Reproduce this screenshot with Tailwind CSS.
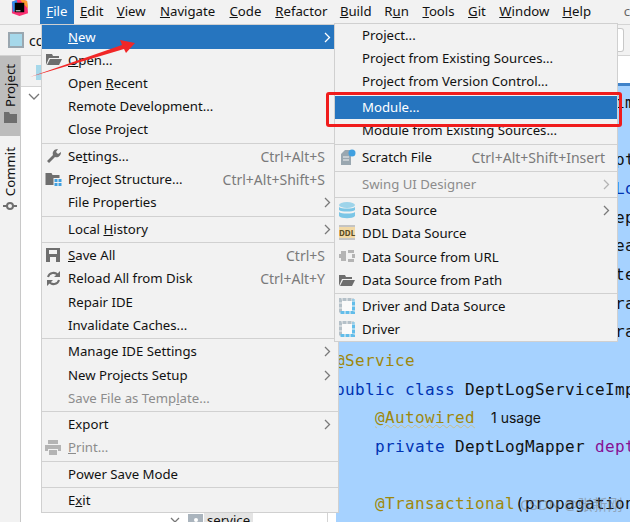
<!DOCTYPE html>
<html lang="en">
<head>
    <meta charset="UTF-8">
    <title>IDE File menu</title>
    <script src="https://cdn.jsdelivr.net/npm/@tailwindcss/browser@4"></script>
</head>
<body class="relative w-[630px] h-[522px] overflow-hidden bg-[#f2f2f2] font-['Noto_Sans',sans-serif] text-[13.2px] text-[#111]">

    <!-- menu bar -->
    <div class="flex h-[24px] bg-[#f2f2f2]">
        <div class="w-[40px] flex justify-center">
            <svg width="17" height="17" viewBox="0 0 18 18" class="-mt-[1px]">
                <path d="M1 3 9 0l8 2 1 13-9 3-8-3z" fill="#fc2f72"/>
                <path d="M9 0l8 2 1 8-6-6z" fill="#ff9a2e"/>
                <path d="M1 3l5-2 2 8-6 5z" fill="#2f8cf0"/>
                <rect x="4" y="4" width="10" height="10" fill="#000"/>
                <rect x="5" y="12" width="5" height="1" fill="#fff"/>
            </svg>
        </div>
        <span class="w-[34px] flex items-center justify-center bg-[#2675bf] text-white"><span><u>F</u>ile</span></span>
        <span class="w-[36px] flex items-center justify-center"><span><u>E</u>dit</span></span>
        <span class="w-[43px] flex items-center justify-center"><span><u>V</u>iew</span></span>
        <span class="w-[70px] flex items-center justify-center"><span><u>N</u>avigate</span></span>
        <span class="w-[46px] flex items-center justify-center"><span><u>C</u>ode</span></span>
        <span class="w-[66px] flex items-center justify-center"><span><u>R</u>efactor</span></span>
        <span class="w-[43px] flex items-center justify-center"><span><u>B</u>uild</span></span>
        <span class="w-[39px] flex items-center justify-center"><span>R<u>u</u>n</span></span>
        <span class="w-[45px] flex items-center justify-center"><span><u>T</u>ools</span></span>
        <span class="w-[32px] flex items-center justify-center"><span><u>G</u>it</span></span>
        <span class="w-[63px] flex items-center justify-center"><span><u>W</u>indow</span></span>
        <span class="w-[42px] flex items-center justify-center"><span><u>H</u>elp</span></span>
        <span class="ml-[26px] flex items-center text-[#666]">c</span>
    </div>

    <!-- nav bar -->
    <div class="flex items-center justify-between h-[32px] pl-[8px] pr-[6px] border-t border-b border-[#d4d4d4]">
        <div class="flex items-center gap-[5px]">
            <div class="w-[16px] h-[16px] bg-[#9aa7b0] p-[2px]"><div class="w-full h-full bg-[#a6d8ea]"></div></div>
            <span class="text-[14px]">co</span>
        </div>
        <div class="w-[14px] h-[24px] bg-white border-r border-y border-[#c8c8c8] rounded-r-[3px]"></div>
    </div>

    <!-- body -->
    <div class="flex h-[466px]">
        <div class="w-[21px] shrink-0 border-r border-[#c8c8c8] flex flex-col">
            <div class="h-[80px] bg-[#bdbdbd] flex flex-col items-center justify-end pb-[13px]">
                <span class="[writing-mode:vertical-rl] rotate-180 leading-[20px]">Project</span>
                <svg width="13" height="11" viewBox="0 0 13 11" class="mt-[5px]"><path d="M0 0h5l1 2h7v9H0z" fill="#6e6e6e"/></svg>
            </div>
            <div class="mt-[11px] flex flex-col items-center">
                <span class="[writing-mode:vertical-rl] rotate-180 leading-[20px]">Commit</span>
                <svg width="14" height="10" viewBox="0 0 14 10" class="mt-[5px]"><path d="M0 5h14" stroke="#6e6e6e" stroke-width="2"/><circle cx="7" cy="5" r="3" fill="#f2f2f2" stroke="#6e6e6e" stroke-width="2"/></svg>
            </div>
        </div>
        <div class="w-[315px] shrink-0 flex flex-col">
            <div class="h-[31px] bg-[#f2f2f2] border-b border-[#d4d4d4] pl-[15px] pt-[9px]">
                <div class="w-[5px] h-[15px] bg-[#a6d8ea]"></div>
            </div>
            <div class="flex-1 bg-white relative">
                <svg width="12" height="8" viewBox="0 0 12 8" class="absolute left-[7px] top-[6px]"><path d="M1 1l5 5 5-5" fill="none" stroke="#777" stroke-width="1.300"/></svg>
                <div class="absolute left-[306px] top-0 bottom-0 border-l border-[#d4d4d4]"></div>
                <div class="absolute left-[149px] top-[425px] flex items-center">
                    <svg width="10" height="7" viewBox="0 0 10 7"><path d="M1 1l4 4 4-4" fill="none" stroke="#777" stroke-width="1.300"/></svg>
                    <div class="w-[15px] h-[12px] ml-[8px] mr-[1px] bg-[#aab4bd] flex items-center justify-center"><div class="w-[4px] h-[4px] rounded-full bg-white"></div></div>
                    <span class="bg-[#e4e4e4] px-[3px] leading-[16px]">service</span>
                </div>
            </div>
        </div>
        <div class="w-[294px] shrink-0 flex flex-col overflow-hidden relative">
            <div class="h-[27px] bg-white shrink-0"></div>
            <div class="h-[3px] bg-[#4083c9] shrink-0"></div>
            <div class="flex-1 bg-[#a6d2ff] font-['DejaVu_Sans_Mono',monospace] text-[16px] tracking-[0.37px] leading-[28.65px] pt-[3px] -indent-px text-[#111]">
                <div class="whitespace-pre">                            im</div>
                <div class="whitespace-pre"> </div>
                <div class="whitespace-pre">                            pt</div>
                <div class="whitespace-pre">                            <span class="text-[#0033b3]">Lo</span></div>
                <div class="whitespace-pre">                            ep</div>
                <div class="whitespace-pre">                            ea</div>
                <div class="whitespace-pre">                            te</div>
                <div class="whitespace-pre">                            ra</div>
                <div class="whitespace-pre">                            ra</div>
                <div class="whitespace-pre text-[#9e880d]">@Service</div>
                <div class="whitespace-pre"><span class="text-[#0033b3]">public class</span> DeptLogServiceImpl</div>
                <div class="whitespace-pre pl-[40px]"><span class="text-[#9e880d] underline decoration-wavy decoration-[#c8bf8a] decoration-1">@Autowired</span><span class="font-['Inter',sans-serif] text-[14px] tracking-normal ml-[16px]">1 usage</span></div>
                <div class="whitespace-pre pl-[40px]"><span class="text-[#0033b3]">private</span> DeptLogMapper <span class="text-[#871094]">deptLog</span></div>
                <div class="whitespace-pre"> </div>
                <div class="whitespace-pre pl-[40px]"><span class="text-[#9e880d]">@Transactional</span>(propagation</div>
            </div>
        </div>
    </div>

    <!-- csdn watermark -->
    <div class="absolute left-[520px] top-[494px] text-[15px] leading-[20px] text-[#777]/50 font-['Noto_Sans','Noto_Sans_CJK_SC',sans-serif]">CSDN @张新刚</div>

    <!-- file menu -->
    <div class="absolute left-[41px] top-[24px] w-[298px] h-[489px] bg-[#f2f2f2] border border-[#d0d0d0]">
        <div class="h-[24px] flex items-center justify-between pt-px pl-[26px] pr-[7px] bg-[#2675bf] text-white"><span><u>N</u>ew</span><svg width="7" height="11" viewBox="0 0 7 11"><path d="M1 1l4.500 4.500L1 10" fill="none" stroke="#fff" stroke-width="1.300"/></svg></div>
        <div class="h-[23px] flex items-center pl-[26px] relative"><svg class="absolute left-[4px] top-[4px]" width="16" height="13" viewBox="0 0 16 13"><path d="M0 1h6l1 2h6v2H3L0 12z" fill="#6e6e6e"/><path d="M4 6h12l-3 6H1z" fill="#6e6e6e"/></svg><span><u>O</u>pen...</span></div>
        <div class="h-[23px] flex items-center pl-[26px]"><span>Open <u>R</u>ecent</span></div>
        <div class="h-[23px] flex items-center pl-[26px]">Remote Development...</div>
        <div class="h-[23px] flex items-center pl-[26px]">Close Project</div>
        <div class="h-[4px] flex items-center"><div class="w-full h-px bg-[#d1d1d1]"></div></div>
        <div class="h-[23px] flex items-center justify-between pl-[26px] pr-[13px] relative"><svg class="absolute left-[4px] top-[3px]" width="16" height="16" viewBox="0 0 16 16"><path d="M1 13l6-6c-1-3 1-6 5-6l-2 3 2 2 3-2c0 4-3 6-6 5l-6 6z" fill="#6e6e6e"/></svg><span>Se<u>t</u>tings...</span><span class="text-[14px] text-[#7a7a7a]">Ctrl+Alt+S</span></div>
        <div class="h-[23px] flex items-center justify-between pl-[26px] pr-[13px] relative"><svg class="absolute left-[3px] top-[4px]" width="17" height="14" viewBox="0 0 16 14"><path d="M0 1h6l1 2h7v3H8v7H0z" fill="#6e6e6e"/><path d="M9 7h3v3H9zM13 7h3v3h-3zM9 11h3v3H9zM13 11h3v3h-3z" fill="#40a0e0"/></svg><span>Project Structure...</span><span class="text-[14px] text-[#7a7a7a]">Ctrl+Alt+Shift+S</span></div>
        <div class="h-[23px] flex items-center justify-between pl-[26px] pr-[7px]"><span>File Properties</span><svg width="7" height="11" viewBox="0 0 7 11"><path d="M1 1l4.500 4.500L1 10" fill="none" stroke="#7a7a7a" stroke-width="1.300"/></svg></div>
        <div class="h-[4px] flex items-center"><div class="w-full h-px bg-[#d1d1d1]"></div></div>
        <div class="h-[23px] flex items-center justify-between pl-[26px] pr-[7px]"><span>Local <u>H</u>istory</span><svg width="7" height="11" viewBox="0 0 7 11"><path d="M1 1l4.500 4.500L1 10" fill="none" stroke="#7a7a7a" stroke-width="1.300"/></svg></div>
        <div class="h-[3px] flex items-center"><div class="w-full h-px bg-[#d1d1d1]"></div></div>
        <div class="h-[23px] flex items-center justify-between pl-[26px] pr-[13px] relative"><svg class="absolute left-[4px] top-[4px]" width="14" height="14" viewBox="0 0 14 14"><path d="M0 0h14v14H0z" fill="#6e6e6e"/><path d="M3 2h8v4H3zM4 9h6v5H4z" fill="#f2f2f2"/></svg><span><u>S</u>ave All</span><span class="text-[14px] text-[#7a7a7a]">Ctrl+S</span></div>
        <div class="h-[23px] flex items-center justify-between pl-[26px] pr-[13px] relative"><svg class="absolute left-[4px] top-[4px]" width="15" height="15" viewBox="0 0 15 15"><path d="M2 6a5.500 5.500 0 0 1 10-1.500M13 9a5.500 5.500 0 0 1-10 1.500" fill="none" stroke="#6e6e6e" stroke-width="2"/><path d="M14 0v6H8zM1 15V9h6z" fill="#6e6e6e"/></svg><span>Reload All from Disk</span><span class="text-[14px] text-[#7a7a7a]">Ctrl+Alt+Y</span></div>
        <div class="h-[24px] flex items-center pt-px pl-[26px]">Repair IDE</div>
        <div class="h-[23px] flex items-center pl-[26px]">Invalidate Caches...</div>
        <div class="h-[3px] flex items-center"><div class="w-full h-px bg-[#d1d1d1]"></div></div>
        <div class="h-[23px] flex items-center justify-between pl-[26px] pr-[7px]"><span>Manage IDE Settings</span><svg width="7" height="11" viewBox="0 0 7 11"><path d="M1 1l4.500 4.500L1 10" fill="none" stroke="#7a7a7a" stroke-width="1.300"/></svg></div>
        <div class="h-[24px] flex items-center justify-between pt-px pl-[26px] pr-[7px]"><span>New Projects Setup</span><svg width="7" height="11" viewBox="0 0 7 11"><path d="M1 1l4.500 4.500L1 10" fill="none" stroke="#7a7a7a" stroke-width="1.300"/></svg></div>
        <div class="h-[23px] flex items-center pl-[26px] text-[#8c8c8c]"><span>Save File as Temp<u>l</u>ate...</span></div>
        <div class="h-[3px] flex items-center"><div class="w-full h-px bg-[#d1d1d1]"></div></div>
        <div class="h-[23px] flex items-center justify-between pl-[26px] pr-[7px]"><span>Export</span><svg width="7" height="11" viewBox="0 0 7 11"><path d="M1 1l4.500 4.500L1 10" fill="none" stroke="#7a7a7a" stroke-width="1.300"/></svg></div>
        <div class="h-[23px] flex items-center pl-[26px] text-[#8c8c8c] relative"><svg class="absolute left-[3px] top-[4px]" width="16" height="15" viewBox="0 0 16 15"><path d="M3 0h10v4H3zM0 5h16v6h-3V9H3v2H0zM4 10h8v5H4z" fill="#b4b4b4"/></svg><span><u>P</u>rint...</span></div>
        <div class="h-[4px] flex items-center"><div class="w-full h-px bg-[#d1d1d1]"></div></div>
        <div class="h-[23px] flex items-center pl-[26px]">Power Save Mode</div>
        <div class="h-[3px] flex items-center"><div class="w-full h-px bg-[#d1d1d1]"></div></div>
        <div class="h-[23px] flex items-center pl-[26px]"><span>E<u>x</u>it</span></div>
    </div>

    <!-- new submenu -->
    <div class="absolute left-[334px] top-[23px] w-[284px] h-[319px] bg-[#f2f2f2] border border-[#d0d0d0]">
        <div class="h-[23px] flex items-center pl-[27px]">Project...</div>
        <div class="h-[23px] flex items-center pl-[27px]">Project from Existing Sources...</div>
        <div class="h-[23px] flex items-center pl-[27px]">Project from Version Control...</div>
        <div class="h-[23px] mt-[3px] flex items-center pl-[27px] bg-[#2675bf] text-white">Module...</div>
        <div class="h-[24px] flex items-center pl-[27px]">Module from Existing Sources...</div>
        <div class="h-[3px] flex items-center"><div class="w-full h-px bg-[#d1d1d1]"></div></div>
        <div class="h-[23px] flex items-center justify-between pl-[27px] pr-[12px] relative"><svg class="absolute left-[5px] top-[3px]" width="16" height="17" viewBox="0 0 16 17"><path d="M1 5l4-4h6v15H1z" fill="#9aa7b0"/><circle cx="12" cy="4" r="3.500" fill="#40a0e0"/><path d="M3 8h6M3 11h6" stroke="#f2f2f2"/></svg><span>Scratch File</span><span class="text-[14px] text-[#7a7a7a]">Ctrl+Alt+Shift+Insert</span></div>
        <div class="h-[4px] flex items-center"><div class="w-full h-px bg-[#d1d1d1]"></div></div>
        <div class="h-[23px] flex items-center justify-between pl-[27px] pr-[7px] text-[#8c8c8c]"><span>Swing UI Designer</span><svg width="7" height="11" viewBox="0 0 7 11"><path d="M1 1l4.500 4.500L1 10" fill="none" stroke="#b4b4b4" stroke-width="1.300"/></svg></div>
        <div class="h-[3px] flex items-center"><div class="w-full h-px bg-[#d1d1d1]"></div></div>
        <div class="h-[23px] flex items-center justify-between pl-[27px] pr-[7px] relative"><svg class="absolute left-[4px] top-[3px]" width="16" height="17" viewBox="0 0 16 17"><ellipse cx="8" cy="3" rx="8" ry="3" fill="#9ed4ea"/><path d="M0 5c2 2 14 2 16 0v3c-2 2-14 2-16 0zM0 10c2 2 14 2 16 0v4c-2 3-14 3-16 0z" fill="#7cc6e6"/></svg><span>Data Source</span><svg width="7" height="11" viewBox="0 0 7 11"><path d="M1 1l4.500 4.500L1 10" fill="none" stroke="#7a7a7a" stroke-width="1.300"/></svg></div>
        <div class="h-[23px] flex items-center pl-[27px] relative"><div class="absolute left-[4px] top-[3px] w-[16px] h-[15px] bg-[#f2d9a6] border-y-2 border-[#c4c4c4] text-[8px] leading-[11px] font-bold text-center text-[#5a4a20]">DDL</div>DDL Data Source</div>
        <div class="h-[24px] flex items-center pt-px pl-[27px] relative"><svg class="absolute left-[4px] top-[5px]" width="16" height="12" viewBox="0 0 16 12"><path d="M0 4h2V1h5v10H2V8H0zM9 0h6v3H9zM9 9h6v3H9zM13 4h3v4h-3z" fill="#b4b4b4"/></svg>Data Source from URL</div>
        <div class="h-[23px] flex items-center pl-[27px] relative"><svg class="absolute left-[4px] top-[5px]" width="16" height="13" viewBox="0 0 16 13"><path d="M0 1h6l1 2h6v2H3L0 12z" fill="#6e6e6e"/><path d="M4 6h12l-3 6H1z" fill="#6e6e6e"/></svg>Data Source from Path</div>
        <div class="h-[3px] flex items-center"><div class="w-full h-px bg-[#d1d1d1]"></div></div>
        <div class="h-[23px] flex items-center pl-[27px] relative"><svg class="absolute left-[4px] top-[3px]" width="16" height="16" viewBox="0 0 16 16"><rect x="3" y="3" width="10" height="10" fill="#fafafa"/><path d="M1.500 14.500V1.500h13" fill="none" stroke="#b4c0c8" stroke-width="3" stroke-dasharray="4 1"/><path d="M1.500 14.500h13V1.500" fill="none" stroke="#62bdea" stroke-width="3" stroke-dasharray="4 1"/></svg>Driver and Data Source</div>
        <div class="h-[23px] flex items-center pl-[27px] relative"><svg class="absolute left-[4px] top-[3px]" width="16" height="16" viewBox="0 0 16 16"><rect x="3" y="3" width="10" height="10" fill="#fafafa"/><path d="M1.500 14.500V1.500h13" fill="none" stroke="#b4c0c8" stroke-width="3" stroke-dasharray="4 1"/><path d="M1.500 14.500h13V1.500" fill="none" stroke="#62bdea" stroke-width="3" stroke-dasharray="4 1"/></svg>Driver</div>
    </div>

    <!-- red annotations -->
    <div class="absolute left-[326px] top-[92px] w-[296px] h-[35px] border-[3px] border-[#f01c1c] rounded-[3px]"></div>
    <svg class="absolute left-0 top-0 pointer-events-none" width="630" height="522" viewBox="0 0 630 522">
        <path d="M30 77 122 45 120 40 135 43 126 53 124 49z" fill="#f12727"/>
    </svg>
</body>
</html>
